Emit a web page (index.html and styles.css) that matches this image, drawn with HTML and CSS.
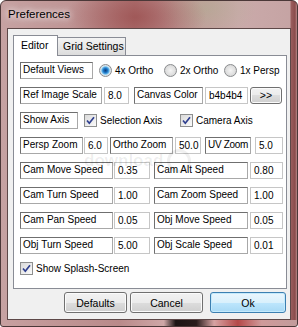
FILE: index.html
```html
<!DOCTYPE html>
<html lang="en">
<head>
  <meta charset="UTF-8" />
  <title>Preferences</title>
  <link rel="stylesheet" href="styles.css">
</head>
<body>
  <div class="window">
    <div class="titlebar">Preferences</div>
    <div class="client">
      <div class="tabs">
        <div class="tab active">Editor</div>
        <div class="tab grid">Grid Settings</div>
      </div>

      <div class="panel">
        <!-- watermark from the source picture -->
        <div class="watermark">download<span class="wm-ring"></span></div>

        <div class="row">
          <span class="lbl w73">Default Views</span>
          <span class="opt ml6 w65"><i class="radio on"></i>4x Ortho</span>
          <span class="opt w60"><i class="radio"></i>2x Ortho</span>
          <span class="opt"><i class="radio"></i>1x Persp</span>
        </div>

        <div class="row">
          <span class="lbl w82">Ref Image Scale</span>
          <span class="val ml2 w25">8.0</span>
          <span class="lbl ml5 w69">Canvas Color</span>
          <span class="val ml2 w43">b4b4b4</span>
          <button class="btn small ml2 w32">&gt;&gt;</button>
        </div>

        <div class="row">
          <span class="lbl w58">Show Axis</span>
          <span class="opt ml6 w96">
            <i class="check"><svg viewBox="0 0 11 11" width="11" height="11"><path d="M2 5.5 L4.3 8.2 L9 2.2" fill="none" stroke="#2f3f8f" stroke-width="1.7"/></svg></i>Selection Axis
          </span>
          <span class="opt">
            <i class="check"><svg viewBox="0 0 11 11" width="11" height="11"><path d="M2 5.5 L4.3 8.2 L9 2.2" fill="none" stroke="#2f3f8f" stroke-width="1.7"/></svg></i>Camera Axis
          </span>
        </div>

        <div class="row">
          <span class="lbl w63">Persp Zoom</span>
          <span class="val ml1 w24">6.0</span>
          <span class="lbl ml2 w63">Ortho Zoom</span>
          <span class="val ml2 w26">50.0</span>
          <span class="lbl tight ml4 w46">UV Zoom</span>
          <span class="val ml4 w28">5.0</span>
        </div>

        <div class="row">
          <span class="lbl w93">Cam Move Speed</span>
          <span class="val ml1 w36">0.35</span>
          <span class="lbl ml4 w94">Cam Alt Speed</span>
          <span class="val ml2 w33">0.80</span>
        </div>

        <div class="row">
          <span class="lbl w93">Cam Turn Speed</span>
          <span class="val ml1 w36">1.00</span>
          <span class="lbl ml4 w94">Cam Zoom Speed</span>
          <span class="val ml2 w33">1.00</span>
        </div>

        <div class="row">
          <span class="lbl w93">Cam Pan Speed</span>
          <span class="val ml1 w36">0.05</span>
          <span class="lbl ml4 w94">Obj Move Speed</span>
          <span class="val ml2 w33">0.05</span>
        </div>

        <div class="row">
          <span class="lbl w93">Obj Turn Speed</span>
          <span class="val ml1 w36">5.00</span>
          <span class="lbl ml4 w94">Obj Scale Speed</span>
          <span class="val ml2 w33">0.01</span>
        </div>

        <div class="row splash">
          <span class="opt">
            <i class="check"><svg viewBox="0 0 11 11" width="11" height="11"><path d="M2 5.5 L4.3 8.2 L9 2.2" fill="none" stroke="#2f3f8f" stroke-width="1.7"/></svg></i>Show Splash-Screen
          </span>
        </div>
      </div>

      <div class="buttons">
        <button class="btn w63">Defaults</button>
        <button class="btn ml3 w73">Cancel</button>
        <button class="btn default ml7 w76">Ok</button>
      </div>
    </div>
  </div>
</body>
</html>
```

FILE: styles.css
```css
body {
  margin: 0;
  background: #fff;
  font-family: "Liberation Sans", Arial, sans-serif;
  font-size: 10px;
  color: #000;
}

/* window frame (Aero glass, reddish tint) */
.window {
  box-sizing: border-box;
  width: 298px;
  height: 327px;
  display: flex;
  flex-direction: column;
  padding: 0 6px 6px;
  border: 1px solid #4b3838;
  border-radius: 6px 6px 3px 3px;
  background:
    linear-gradient(90deg, #c7a0a0 0, #b98a8a 40%, #cfa7a7 55%, #1c1414 59%, #2a1c1c 66%, #d7a3a3 72%, #b54848 80%, #cf9a9a 88%, #c29c9c 100%) bottom / 100% 6px no-repeat,
    linear-gradient(90deg, transparent 289px, #9a5e5e 290px, #8a4c4c 294px, #b98a8a 296px),
    radial-gradient(ellipse 70px 36px at 135px 16px, rgba(150, 70, 70, 0.65), transparent),
    radial-gradient(ellipse 50px 30px at 205px 8px, rgba(170, 175, 140, 0.45), transparent),
    linear-gradient(90deg, #c6a2a2 0, #bf9494 25%, #b27a7a 45%, #c09696 60%, #caaaaa 80%, #c5a3a3 100%);
}

.titlebar {
  height: 27px;
  padding-left: 1px;
  line-height: 27px;
  font-size: 11.5px;
  text-shadow: 0 0 6px #fff, 0 0 10px rgba(255, 255, 255, 0.8);
}

.client {
  flex: 1;
  display: flex;
  flex-direction: column;
  padding: 6px 3px 6px 5px;
  background: #f0f0f0;
  border: 1px solid #5d4848;
}

/* tabs */
.tabs {
  display: flex;
  align-items: flex-end;
  height: 20px;
}

.tab {
  box-sizing: border-box;
  height: 18px;
  border: 1px solid #898c95;
  border-bottom: none;
  line-height: 17px;
  font-size: 10.5px;
  white-space: nowrap;
}

.tab.active {
  position: relative;
  z-index: 1;
  width: 45px;
  height: 21px;
  margin-bottom: -1px;
  padding-left: 7px;
  line-height: 19px;
  background: #fff;
}

.tab.grid {
  width: 69px;
  margin-left: -1px;
  padding-left: 5px;
  background: linear-gradient(#f3f3f3, #e8e8e8 50%, #dcdcdc);
}

.panel {
  position: relative;
  box-sizing: border-box;
  height: 234px;
  padding: 6px 0 0 6px;
  border: 1px solid #898c95;
  background: #fff;
}

.watermark {
  position: absolute;
  left: 70px;
  top: 93px;
  display: flex;
  align-items: center;
  font-size: 17px;
  font-weight: bold;
  color: rgba(0, 0, 0, 0.07);
}

.wm-ring {
  width: 18px;
  height: 18px;
  margin-left: 4px;
  border: 3px solid rgba(0, 0, 0, 0.06);
  border-radius: 50%;
}

/* rows of fields */
.row {
  display: flex;
  align-items: center;
  height: 17px;
  margin-bottom: 8px;
}

.row.splash {
  height: 13px;
  margin-top: 3px;
}

.lbl {
  box-sizing: border-box;
  height: 17px;
  padding: 0 0 0 2px;
  border: 1px solid;
  border-color: #6f6f6f #a8a8a8 #a8a8a8 #6f6f6f;
  line-height: 14px;
  white-space: nowrap;
  overflow: hidden;
}

.lbl.tight {
  letter-spacing: -0.3px;
}

.val {
  box-sizing: border-box;
  height: 17px;
  padding-left: 3px;
  border: 1px solid #c6c6c6;
  line-height: 15px;
}

.opt {
  display: flex;
  align-items: center;
  white-space: nowrap;
}

.radio {
  flex: none;
  box-sizing: border-box;
  width: 13px;
  height: 13px;
  margin-right: 3px;
  border: 1px solid #8a8c8e;
  border-radius: 50%;
  background: radial-gradient(circle, #f4f4f4 0, #dedede 60%, #c9c9c9 100%);
}

.radio.on {
  background: radial-gradient(circle, #0b3f7a 0, #1a6fc0 2px, #58b0e8 3.5px, #c9e3f3 4.5px, #e4e4e4 5.5px);
}

.check {
  flex: none;
  box-sizing: border-box;
  display: flex;
  width: 13px;
  height: 13px;
  margin-right: 3px;
  border: 1px solid #8e8f8f;
  background: linear-gradient(135deg, #dadada, #fbfbfb);
}

/* buttons */
.buttons {
  display: flex;
  justify-content: flex-end;
  margin-top: 3px;
  padding-right: 1px;
}

.btn {
  box-sizing: border-box;
  height: 21px;
  padding: 0;
  border: 1px solid #707070;
  border-radius: 3px;
  background: linear-gradient(#f2f2f2 0, #ebebeb 50%, #dddddd 50%, #cfcfcf 100%);
  box-shadow: inset 0 0 0 1px #fbfbfb;
  font: inherit;
  font-size: 10.5px;
  color: #000;
}

.btn.small {
  height: 17px;
  line-height: 13px;
}

.btn.default {
  border-color: #3c7fb1;
  background: linear-gradient(#eaf6fd 0, #d9f0fc 50%, #bee6fd 50%, #a7d9f5 100%);
  box-shadow: inset 0 0 0 1px #c4eafc;
}

/* widths and gaps */
.w24 { width: 24px; }
.w25 { width: 25px; }
.w26 { width: 26px; }
.w28 { width: 28px; }
.w32 { width: 32px; }
.w33 { width: 33px; }
.w36 { width: 36px; }
.w43 { width: 43px; }
.w46 { width: 46px; }
.w58 { width: 58px; }
.w60 { width: 60px; }
.w63 { width: 63px; }
.w65 { width: 65px; }
.w69 { width: 69px; }
.w73 { width: 73px; }
.w76 { width: 76px; }
.w82 { width: 82px; }
.w93 { width: 93px; }
.w94 { width: 94px; }
.w96 { width: 96px; }

.ml1 { margin-left: 1px; }
.ml2 { margin-left: 2px; }
.ml3 { margin-left: 3px; }
.ml4 { margin-left: 4px; }
.ml5 { margin-left: 5px; }
.ml6 { margin-left: 6px; }
.ml7 { margin-left: 7px; }
```
